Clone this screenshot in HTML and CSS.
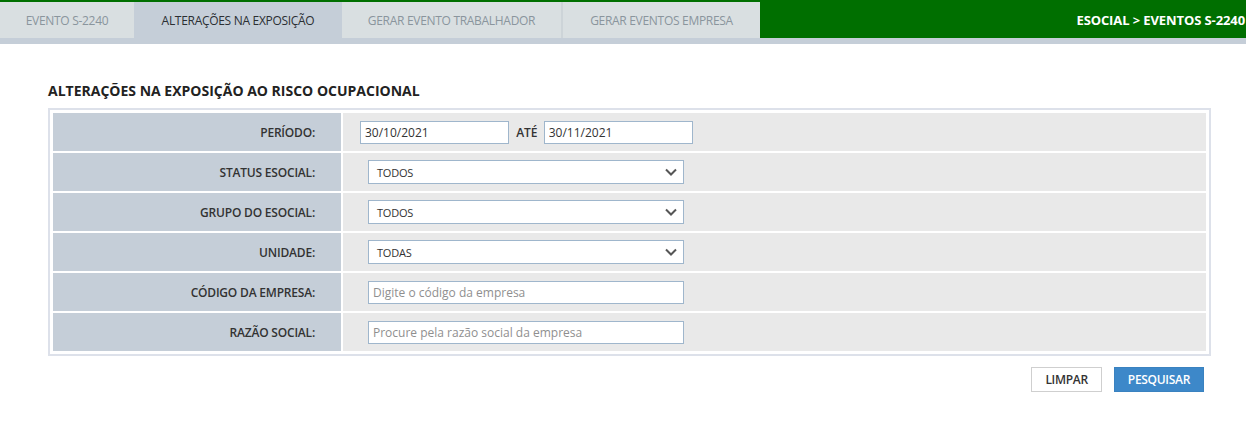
FILE: index.html
```html
<!DOCTYPE html>
<html lang="pt-BR">
<head>
  <meta charset="UTF-8" />
  <title>eSocial - Eventos S-2240</title>
  <link rel="stylesheet" href="styles.css">
</head>
<body>

  <div class="topbar">
    <ul class="tabs">
      <li class="tab">EVENTO S-2240</li>
      <li class="tab active">ALTERAÇÕES NA EXPOSIÇÃO</li>
      <li class="tab">GERAR EVENTO TRABALHADOR</li>
      <li class="tab">GERAR EVENTOS EMPRESA</li>
    </ul>
    <div class="breadcrumb">ESOCIAL &gt; EVENTOS S-2240</div>
  </div>
  <div class="strip"></div>

  <div class="content">
    <h2 class="page-title">ALTERAÇÕES NA EXPOSIÇÃO AO RISCO OCUPACIONAL</h2>

    <div class="filter-box">
      <table class="filter-table">
        <tr>
          <th>PERÍODO:</th>
          <td class="period">
            <input class="field date" type="text" value="30/10/2021">
            <span class="ate">ATÉ</span>
            <input class="field date" type="text" value="30/11/2021">
          </td>
        </tr>
        <tr>
          <th>STATUS ESOCIAL:</th>
          <td><div class="select">TODOS<svg class="chevron" viewBox="0 0 12 8"><path d="M1 1.5l5 5 5-5"></path></svg></div></td>
        </tr>
        <tr>
          <th>GRUPO DO ESOCIAL:</th>
          <td><div class="select">TODOS<svg class="chevron" viewBox="0 0 12 8"><path d="M1 1.5l5 5 5-5"></path></svg></div></td>
        </tr>
        <tr>
          <th>UNIDADE:</th>
          <td><div class="select">TODAS<svg class="chevron" viewBox="0 0 12 8"><path d="M1 1.5l5 5 5-5"></path></svg></div></td>
        </tr>
        <tr>
          <th>CÓDIGO DA EMPRESA:</th>
          <td><input class="field wide" type="text" placeholder="Digite o código da empresa"></td>
        </tr>
        <tr>
          <th>RAZÃO SOCIAL:</th>
          <td><input class="field wide" type="text" placeholder="Procure pela razão social da empresa"></td>
        </tr>
      </table>
    </div>

    <div class="actions">
      <button class="btn">LIMPAR</button>
      <button class="btn primary">PESQUISAR</button>
    </div>
  </div>

</body>
</html>
```

FILE: styles.css
```css
* {
  margin: 0;
  padding: 0;
  box-sizing: border-box;
}

body {
  font-family: "Open Sans", "Liberation Sans", sans-serif;
  font-size: 12px;
  color: #333;
  background: #fff;
}

/* top navigation */
.topbar {
  display: flex;
  align-items: stretch;
  height: 38px;
  background: #006f00;
  padding-top: 2px;
}

.tabs {
  display: flex;
  list-style: none;
}

.tab {
  display: flex;
  align-items: center;
  justify-content: center;
  background: #d9dfe1;
  color: #8a959d;
  font-size: 12px;
  border-right: 2px solid #cdd4d8;
  letter-spacing: -0.3px;
}

.tab:nth-child(1) { width: 134px; border-right: none; }
.tab:nth-child(2) { width: 208px; border-right: none; }
.tab:nth-child(3) { width: 221px; }
.tab:nth-child(4) { width: 197px; border-right: none; }

.tab.active {
  background: #c5ced8;
  color: #2b2f33;
}

.breadcrumb {
  flex: 1;
  display: flex;
  align-items: center;
  justify-content: flex-end;
  color: #fff;
  font-weight: bold;
  font-size: 13px;
  white-space: nowrap;
  overflow: hidden;
  padding-right: 1px;
  letter-spacing: -0.1px;
}

.strip {
  height: 6px;
  background: #c5ced8;
}

/* content */
.content {
  padding: 37px 35px 0 48px;
}

.page-title {
  font-size: 14px;
  font-weight: bold;
  color: #222;
  letter-spacing: 0;
  margin-bottom: 8px;
}

.filter-box {
  border: 2px solid #dde1ea;
  padding: 3px;
}

.filter-table {
  border-collapse: separate;
  border-spacing: 2px;
  margin: -2px;
  width: calc(100% + 4px);
}

.filter-table th {
  width: 288px;
  height: 38px;
  background: #c5ced8;
  text-align: right;
  padding-right: 26px;
  font-size: 12px;
  font-weight: 600;
  color: #333;
  letter-spacing: -0.2px;
}

.filter-table td {
  background: #e9e9e9;
  padding-left: 25px;
}

.filter-table td.period {
  padding-left: 17px;
}

.field {
  height: 23px;
  border: 1px solid #9fb6cc;
  background: #fff;
  font-family: inherit;
  font-size: 12px;
  color: #333;
  padding: 0 4px;
  outline: none;
}

.field::placeholder {
  color: #8f8f8f;
}

.field.date {
  width: 149px;
}

.ate {
  font-weight: 600;
  margin: 0 3px 0 4px;
}

.field.wide {
  width: 316px;
}

.select {
  display: flex;
  align-items: center;
  justify-content: space-between;
  width: 316px;
  height: 24px;
  border: 1px solid #9fb6cc;
  background: #fff;
  padding: 0 6px 0 8px;
  font-size: 11px;
  letter-spacing: -0.2px;
}

.chevron {
  width: 12px;
  height: 8px;
  fill: none;
  stroke: #555;
  stroke-width: 2;
}

/* buttons */
.actions {
  display: flex;
  justify-content: flex-end;
  gap: 12px;
  margin-top: 11px;
  padding-right: 7px;
}

.btn {
  height: 25px;
  padding: 0 13px;
  border: 1px solid #cfcfcf;
  background: #fff;
  font-family: inherit;
  font-size: 12px;
  font-weight: 600;
  color: #333;
  letter-spacing: -0.3px;
}

.btn.primary {
  background: #3d88c9;
  border-color: #3a82c0;
  color: #fff;
}
```
